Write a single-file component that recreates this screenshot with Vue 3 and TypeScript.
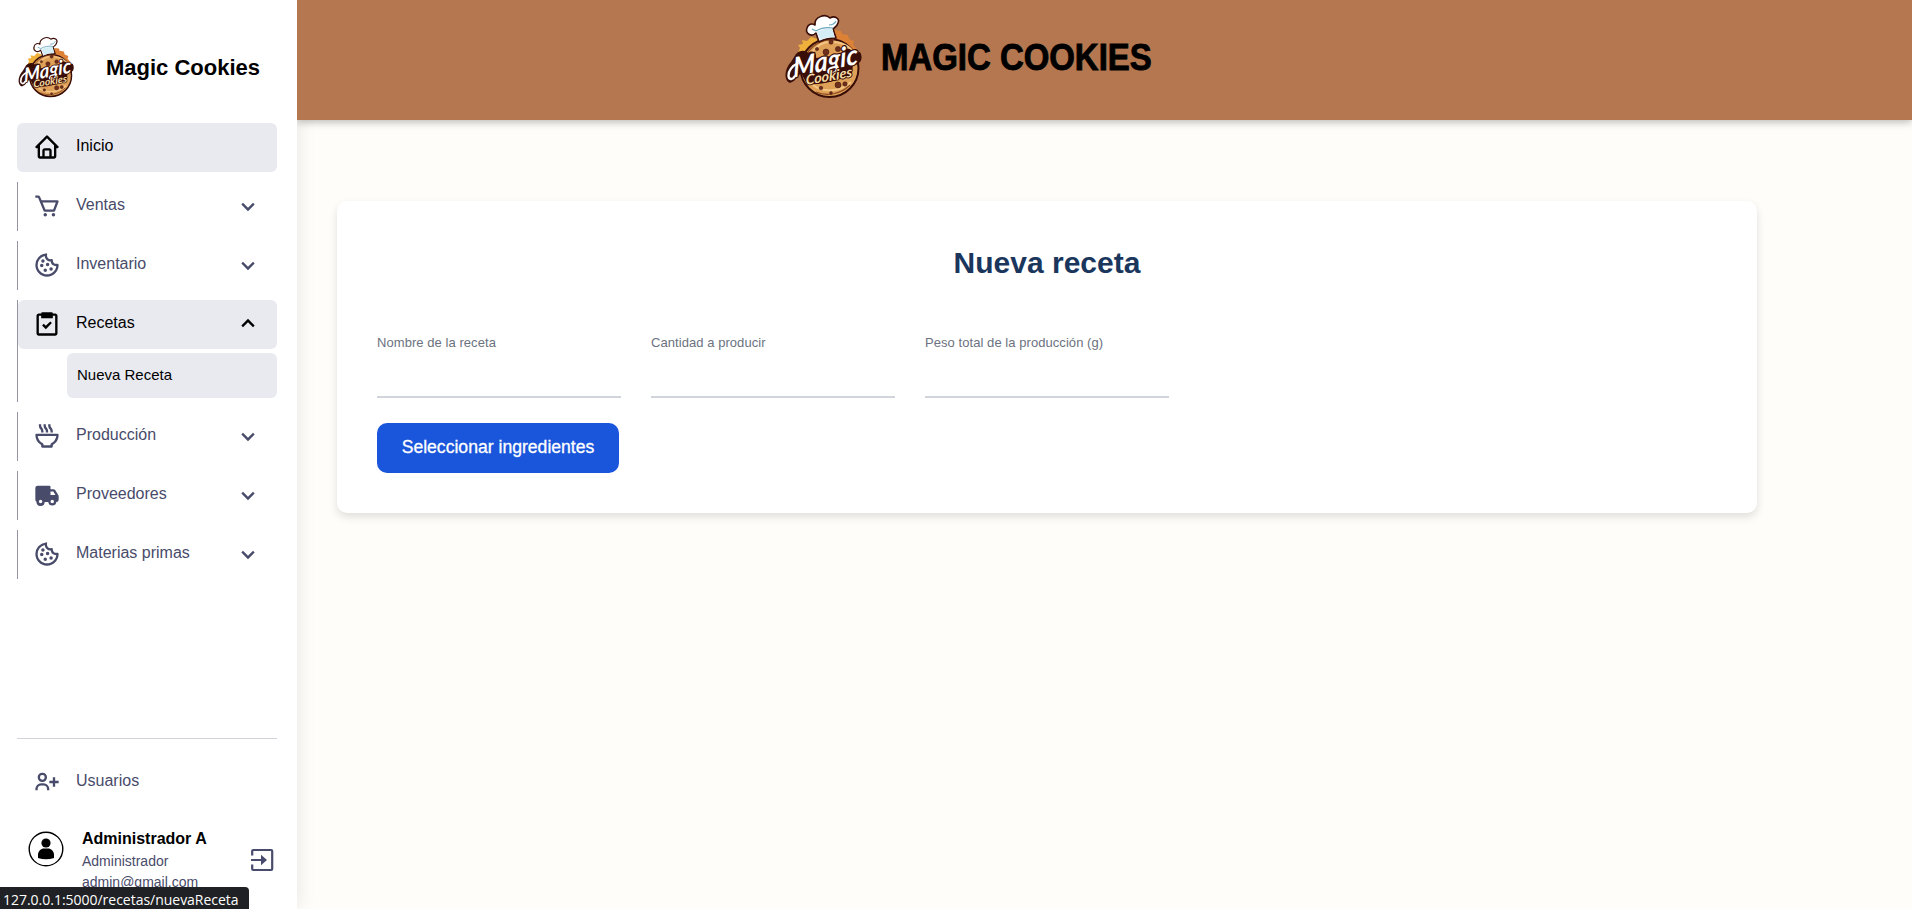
<script setup lang="ts">
import { defineComponent, h, ref } from 'vue'

interface NavGroup {
  label: string
  icon: string
  children?: string[]
}

const icons: Record<string, string> = {
  home: 'M3 13h1v7c0 1.103.897 2 2 2h12c1.103 0 2-.897 2-2v-7h1a1 1 0 0 0 .707-1.707l-9-9a.999.999 0 0 0-1.414 0l-9 9A1 1 0 0 0 3 13zm7 7v-5h4v5h-4zm2-15.586 6 6V20h-2v-5c0-1.103-.897-2-2-2h-4c-1.103 0-2 .897-2 2v5H6v-9.586l6-6z',
  cart: 'M21.822 7.431A1 1 0 0 0 21 7H7.333L6.179 4.23A1.994 1.994 0 0 0 4.333 3H2v2h2.333l4.744 11.385A1 1 0 0 0 10 17h8c.417 0 .79-.259.937-.648l3-8a1 1 0 0 0-.115-.921zM17.307 15h-6.64l-2.5-6h11.39l-2.25 6zM9 19.500a1.500 1.500 0 1 0 3 0a1.500 1.500 0 1 0-3 0zM16 19.500a1.500 1.500 0 1 0 3 0a1.500 1.500 0 1 0-3 0z',
  cookie: 'M21.598 11.064a1.006 1.006 0 0 0-.854-.172A2.938 2.938 0 0 1 20 11c-1.654 0-3-1.346-3.003-2.937.005-.034.016-.136.017-.17a.998.998 0 0 0-1.254-1.006A2.963 2.963 0 0 1 15 7c-1.654 0-3-1.346-3-3 0-.217.031-.444.099-.716a1 1 0 0 0-1.067-1.236A9.956 9.956 0 0 0 2 12c0 5.514 4.486 10 10 10s10-4.486 10-10c0-.049-.003-.097-.007-.16a1.004 1.004 0 0 0-.395-.776zM12 20c-4.411 0-8-3.589-8-8a7.962 7.962 0 0 1 6.006-7.75A5.006 5.006 0 0 0 15 9l.101-.001a5.007 5.007 0 0 0 4.837 4C19.444 16.941 16.073 20 12 20zM11 11.500a1.500 1.500 0 1 0 3 0a1.500 1.500 0 1 0-3 0zM7 8.500a1.500 1.500 0 1 0 3 0a1.500 1.500 0 1 0-3 0zM6 12.500a1.500 1.500 0 1 0 3 0a1.500 1.500 0 1 0-3 0zM14 15.500a1.500 1.500 0 1 0 3 0a1.500 1.500 0 1 0-3 0zM9 16.500a1.500 1.500 0 1 0 3 0a1.500 1.500 0 1 0-3 0z',
  task: 'M5 22h14c1.103 0 2-.897 2-2V5c0-1.103-.897-2-2-2h-2a1 1 0 0 0-1-1H8a1 1 0 0 0-1 1H5c-1.103 0-2 .897-2 2v15c0 1.103.897 2 2 2zM5 5h2v2h10V5h2v15H5V5zm6 8.586-1.793-1.793-1.414 1.414L11 16.414l5.207-5.207-1.414-1.414z',
  bowl: 'M21 10H3a1 1 0 0 0-1 1 10 10 0 0 0 5 8.66V21a1 1 0 0 0 1 1h8a1 1 0 0 0 1-1v-1.340A10 10 0 0 0 22 11a1 1 0 0 0-1-1zm-5.450 8.160a1 1 0 0 0-.550.900V20H9v-.940a1 1 0 0 0-.550-.900A8 8 0 0 1 4.060 12h15.880a8 8 0 0 1-4.390 6.160zM9 9V7.930a4.510 4.510 0 0 0-1.280-3.150A2.490 2.490 0 0 1 7 3V2H5v1a4.510 4.510 0 0 0 1.280 3.170A2.490 2.490 0 0 1 7 7.930V9zM13 9V7.930a4.510 4.510 0 0 0-1.280-3.150A2.490 2.490 0 0 1 11 3V2H9v1a4.510 4.510 0 0 0 1.280 3.170A2.490 2.490 0 0 1 11 7.930V9zM17 9V7.930a4.510 4.510 0 0 0-1.280-3.150A2.490 2.490 0 0 1 15 3V2h-2v1a4.510 4.510 0 0 0 1.280 3.170A2.490 2.490 0 0 1 15 7.930V9z',
  truck: 'M19.150 8a2 2 0 0 0-1.720-1H15V5a1 1 0 0 0-1-1H4a2 2 0 0 0-2 2v10a2 2 0 0 0 1 1.730 3.490 3.490 0 0 0 7 .270h3.100a3.480 3.480 0 0 0 6.900 0 2 2 0 0 0 2-2v-3a1.070 1.070 0 0 0-.140-.520zM15 9h2.430l1.800 3H15zM6.500 19A1.500 1.500 0 1 1 8 17.500 1.500 1.500 0 0 1 6.500 19zm10 0a1.500 1.500 0 1 1 1.500-1.500 1.500 1.500 0 0 1-1.500 1.500z',
  chevron: 'M16.293 9.293 12 13.586 7.707 9.293l-1.414 1.414L12 16.414l5.707-5.707z',
  userPlus: 'M19 8h-2v3h-3v2h3v3h2v-3h3v-2h-3zM4 8a3.910 3.910 0 0 0 4 4 3.910 3.910 0 0 0 4-4 3.910 3.910 0 0 0-4-4 3.910 3.910 0 0 0-4 4zm6 0a1.910 1.910 0 0 1-2 2 1.910 1.910 0 0 1-2-2 1.910 1.910 0 0 1 2-2 1.910 1.910 0 0 1 2 2zM4 18a3 3 0 0 1 3-3h2a3 3 0 0 1 3 3v1h2v-1a5 5 0 0 0-5-5H7a5 5 0 0 0-5 5v1h2z',
}

const groups: NavGroup[] = [
  { label: 'Ventas', icon: 'cart' },
  { label: 'Inventario', icon: 'cookie' },
  { label: 'Recetas', icon: 'task', children: ['Nueva Receta'] },
  { label: 'Producción', icon: 'bowl' },
  { label: 'Proveedores', icon: 'truck' },
  { label: 'Materias primas', icon: 'cookie' },
]
const openGroup = ref('Recetas')
const toggle = (label: string) => {
  openGroup.value = openGroup.value === label ? '' : label
}

const fields = ref([
  { id: 'nombre', label: 'Nombre de la receta', value: '' },
  { id: 'cantidad', label: 'Cantidad a producir', value: '' },
  { id: 'peso', label: 'Peso total de la producción (g)', value: '' },
])

const chips = [
  [41, 37, 3], [53, 34, 2.6], [46, 27, 2.2], [62, 36, 2], [53, 70, 3], [60, 69, 2.2], [36, 73, 1.8], [32, 34, 1.6], [46, 78, 1.4],
]

// Brand emblem shared by the sidebar and the top bar.
const BrandLogo = defineComponent({
  setup() {
    const dark = '#3a0e08'
    const lettering = (label: string, size: number, fill: string, width: number, length: number, transform: string) =>
      h('text', {
        x: 0, y: 0, fill, stroke: dark, 'stroke-width': width, 'stroke-linejoin': 'round', 'paint-order': 'stroke', transform,
        'font-family': "'Lato', 'Liberation Sans', sans-serif", 'font-size': size, 'font-weight': 700, 'font-style': 'italic',
        textLength: length, lengthAdjust: 'spacingAndGlyphs',
      }, label)
    return () => h('svg', { viewBox: '0 0 78 84', overflow: 'visible', 'aria-hidden': 'true' }, [
      h('path', { d: 'M13 38l2-5-2-3 5-1-1-4 5 1 4-4 7 2-12 15z', fill: '#f0b13c' }),
      h('path', { d: 'M50 15l6 1 1 3 6 1 1 4 5 2-1 4 4 4-2 6-22-17z', fill: '#dd8136' }),
      h('circle', { cx: 44.5, cy: 53, r: 29, fill: '#dfa058', stroke: dark, 'stroke-width': 2 }),
      h('path', { d: 'M20 42c6-12 17-18 29-17M31 77c11 5 25 2 34-7', fill: 'none', stroke: '#8d4b22', 'stroke-width': 1.2 }),
      h('path', { d: 'M26 38c7-9 15-12 22-11 12 0 19 7 21 12M28 70c10 8 27 7 38-3', fill: 'none', stroke: '#f4c583', 'stroke-width': 2 }),
      ...chips.map(([cx, cy, r]) => h('circle', { cx, cy, r, fill: '#6e2f1c', stroke: dark, 'stroke-width': 0.5 })),
      h('path', { d: 'M31 18c-5 5-11 0-9-5 1-4 5-5 8-3-1-8 10-12 15-7 5-3 10 1 8 5-1 4-4 5-5 6l3 9c-6 0-12 1-17 4z', fill: '#fff', stroke: dark, 'stroke-width': 1.6, 'stroke-linejoin': 'round' }),
      h('path', { d: 'M31.500 17c6-3 11-4 16-3l2 8c-6 0-10 1-14 3z', fill: '#d5edf4' }),
      h('path', { d: 'M31 16c5-3 11-4 17-3M27 14l4 2M44 10c4 0 6-2 7-4', fill: 'none', stroke: '#68a7bd', 'stroke-width': 1.2 }),
      h('path', { d: 'M5 68C-2 65 0 53 6 47l5-8c4-4 9-4 12-1 4-3 9-1 8 5l15-2 11-3 4-4c4-1 6 1 6 4l8-1c4 7 0 13-7 13l-1 8c-13 8-30 12-45 11l-6-11-7 8z', fill: dark }),
      lettering('Magic', 27, '#fff', 2.5, 66, 'translate(8.500 62.500) rotate(-12) skewX(-10)'),
      lettering('Cookies', 14, '#f4dda5', 1.8, 47, 'translate(21 70) rotate(-10) skewX(-8)'),
      h('path', { d: 'M9.500 61.500c-2 4-6 3-6-1 0-5 4-10 9-12', fill: 'none', stroke: '#fff', 'stroke-width': 2.4, 'stroke-linecap': 'round' }),
    ])
  },
})
</script>

<template>
  <div class="app">
    <aside class="sidebar">
      <div class="brand">
        <BrandLogo class="brand-logo" />
        <span class="brand-name">Magic Cookies</span>
      </div>

      <nav class="nav">
        <div class="group plain">
          <a class="row active">
            <svg class="icon" viewBox="0 0 24 24"><path :d="icons.home" /></svg>
            <span class="row-label">Inicio</span>
          </a>
        </div>
        <div v-for="g in groups" :key="g.label" class="group" :class="{ open: openGroup === g.label }">
          <a class="row" :class="{ active: openGroup === g.label }" @click="toggle(g.label)">
            <svg class="icon" viewBox="0 0 24 24"><path :d="icons[g.icon]" /></svg>
            <span class="row-label">{{ g.label }}</span>
            <svg class="icon chevron" viewBox="0 0 24 24"><path :d="icons.chevron" /></svg>
          </a>
          <div v-if="g.children && openGroup === g.label" class="children">
            <a v-for="c in g.children" :key="c" class="child">{{ c }}</a>
          </div>
        </div>
      </nav>

      <div class="footer">
        <a class="row">
          <svg class="icon" viewBox="0 0 24 24"><path :d="icons.userPlus" /></svg>
          <span class="row-label">Usuarios</span>
        </a>
        <div class="account">
          <svg class="avatar" viewBox="0 0 36 36">
            <circle cx="18" cy="18" r="16.800" fill="#fff" stroke="#000" stroke-width="1.400" />
            <circle cx="18" cy="12" r="4.600" />
            <path d="M10 27v-3c0-4 3-6.500 6-6.500h4c3 0 6 2.500 6 6.500v3q-8 2.600-16 0z" />
          </svg>
          <div class="who">
            <strong>Administrador A</strong>
            <span>Administrador</span>
            <span>admin@gmail.com</span>
          </div>
          <svg class="exit" viewBox="0 0 24 24">
            <path d="M2.200 7.500V3a1 1 0 0 1 1-1h18a1 1 0 0 1 1 1v18a1 1 0 0 1-1 1h-18a1 1 0 0 1-1-1v-4.500M1 12h11" fill="none" stroke="currentColor" stroke-width="2.200" />
            <path d="M11 6.800 17 12l-6 5.200z" />
          </svg>
        </div>
      </div>
    </aside>

    <div class="page">
      <header class="topbar">
        <BrandLogo class="topbar-logo" />
        <h1 class="topbar-title">MAGIC COOKIES</h1>
      </header>
      <main class="content">
        <section class="card">
          <h2 class="card-title">Nueva receta</h2>
          <form class="form" @submit.prevent>
            <div class="fields">
              <div v-for="f in fields" :key="f.id" class="field">
                <label :for="f.id">{{ f.label }}</label>
                <input :id="f.id" v-model="f.value" type="text" />
              </div>
            </div>
            <button class="submit" type="button">Seleccionar ingredientes</button>
          </form>
        </section>
      </main>
    </div>

    <div class="status">127.0.0.1:5000/recetas/nuevaReceta</div>
  </div>
</template>

<style>
body {
  margin: 0;
  overflow: hidden;
}
</style>

<style scoped>
.app {
  position: relative;
  display: flex;
  height: 909px;
  overflow: hidden;
  background: #fffdf9;
  font-family: 'Liberation Sans', Arial, sans-serif;
  color: #000;
}
.sidebar {
  box-sizing: border-box;
  display: flex;
  flex-direction: column;
  flex: none;
  width: 297px;
  padding: 37px 20px 0 17px;
  background: #fff;
  box-shadow: 0 0 18px rgba(0, 0, 0, 0.1);
}
.brand {
  display: flex;
  align-items: center;
  height: 61px;
  margin-bottom: 25px;
}
.brand-logo {
  width: 57px;
  height: 61px;
  margin-left: 1px;
}
.brand-name {
  margin-left: 31px;
  padding-top: 1px;
  font-size: 22px;
  font-weight: 700;
  white-space: nowrap;
}
.nav {
  display: flex;
  flex-direction: column;
  gap: 10px;
  height: 615px;
}
.group {
  border-left: 1px solid #9394a5;
}
.group.plain {
  border-left: 0;
}
.group.open {
  padding-bottom: 4px;
}
.row {
  display: flex;
  align-items: center;
  height: 49px;
  padding-left: 14.500px;
  border-radius: 6px;
  color: #484b6a;
  font-size: 16px;
  cursor: pointer;
}
.plain .row,
.footer .row {
  padding-left: 15.500px;
}
.row.active {
  background: #e9eaf0;
  color: #000;
}
.icon {
  flex: none;
  width: 28px;
  height: 28px;
  margin-top: -1px;
  fill: currentColor;
}
.row-label {
  flex: 1;
  margin-left: 15.500px;
  padding-bottom: 4px;
  white-space: nowrap;
}
.chevron {
  margin-right: 15.500px;
}
.open .chevron {
  transform: rotate(180deg);
}
.children {
  padding: 4px 0 0 49px;
}
.child {
  box-sizing: border-box;
  display: flex;
  align-items: center;
  height: 45px;
  padding: 0 10px 2px;
  border-radius: 6px;
  background: #e9eaf0;
  font-size: 15px;
}
.footer {
  padding-top: 19px;
  border-top: 1px solid #d2d3db;
}
.account {
  display: flex;
  align-items: flex-start;
  padding: 22px 3px 0 11px;
}
.avatar {
  flex: none;
  width: 36px;
  height: 36px;
  margin-top: 2px;
}
.who {
  display: flex;
  flex: 1;
  flex-direction: column;
  margin-left: 18px;
  color: #484b6a;
  font-size: 14px;
  line-height: 21px;
}
.who strong {
  color: #000;
  font-size: 16px;
  line-height: 20px;
  white-space: nowrap;
}
.who span:first-of-type {
  margin-top: 2px;
}
.exit {
  flex: none;
  width: 24px;
  height: 24px;
  margin-top: 19px;
  fill: currentColor;
  color: #484b6a;
}
.page {
  flex: 1;
  min-width: 0;
}
.topbar {
  box-sizing: border-box;
  position: relative;
  display: flex;
  align-items: flex-start;
  height: 120px;
  padding: 15px 0 0 488px;
  background: #b4774f;
  box-shadow: 0 2px 8px rgba(0, 0, 0, 0.28);
  clip-path: inset(0 0 -20px 0);
}
.topbar-logo {
  flex: none;
  width: 78px;
  height: 84px;
}
.topbar-title {
  margin: 22px 0 0 18px;
  font-size: 36.500px;
  line-height: 42px;
  transform: scaleX(0.902);
  transform-origin: left;
  -webkit-text-stroke: 0.900px #000;
  white-space: nowrap;
}
.content {
  padding: 81px 155px 0 40px;
}
.card {
  box-sizing: border-box;
  height: 312px;
  padding: 40px;
  border-radius: 10px;
  background: #fff;
  box-shadow: 0 4px 8px rgba(0, 0, 0, 0.12);
}
.card-title {
  margin: 4px 0 0;
  color: #1a365d;
  font-size: 30px;
  line-height: 36px;
  text-align: center;
}
.form {
  margin-top: 54px;
}
.fields {
  display: grid;
  grid-template-columns: repeat(3, 244px);
  gap: 30px;
}
.field {
  display: flex;
  flex-direction: column;
}
.field label {
  color: #6b7280;
  font-size: 13px;
  letter-spacing: 0.060px;
  line-height: 16px;
}
.field input {
  box-sizing: border-box;
  width: 100%;
  height: 47px;
  padding: 10px 0;
  border: 0;
  border-bottom: 2px solid #d1d5db;
  outline: 0;
  background: transparent;
  font: inherit;
}
.submit {
  height: 50px;
  width: 242px;
  margin-top: 25px;
  padding: 0 0 1px;
  border: 0;
  border-radius: 10px;
  background: #1a56db;
  color: #fff;
  font-family: inherit;
  font-size: 17.6px;
  -webkit-text-stroke: 0.3px #fff;
  white-space: nowrap;
}
.status {
  position: absolute;
  bottom: 0;
  left: 0;
  box-sizing: border-box;
  width: 249px;
  height: 22px;
  padding-left: 3px;
  border-top-right-radius: 4px;
  background: #202124;
  color: #fff;
  font-family: 'Open Sans', 'Noto Sans', sans-serif;
  font-size: 14px;
  letter-spacing: -0.020px;
  line-height: 26px;
  white-space: nowrap;
}
</style>
